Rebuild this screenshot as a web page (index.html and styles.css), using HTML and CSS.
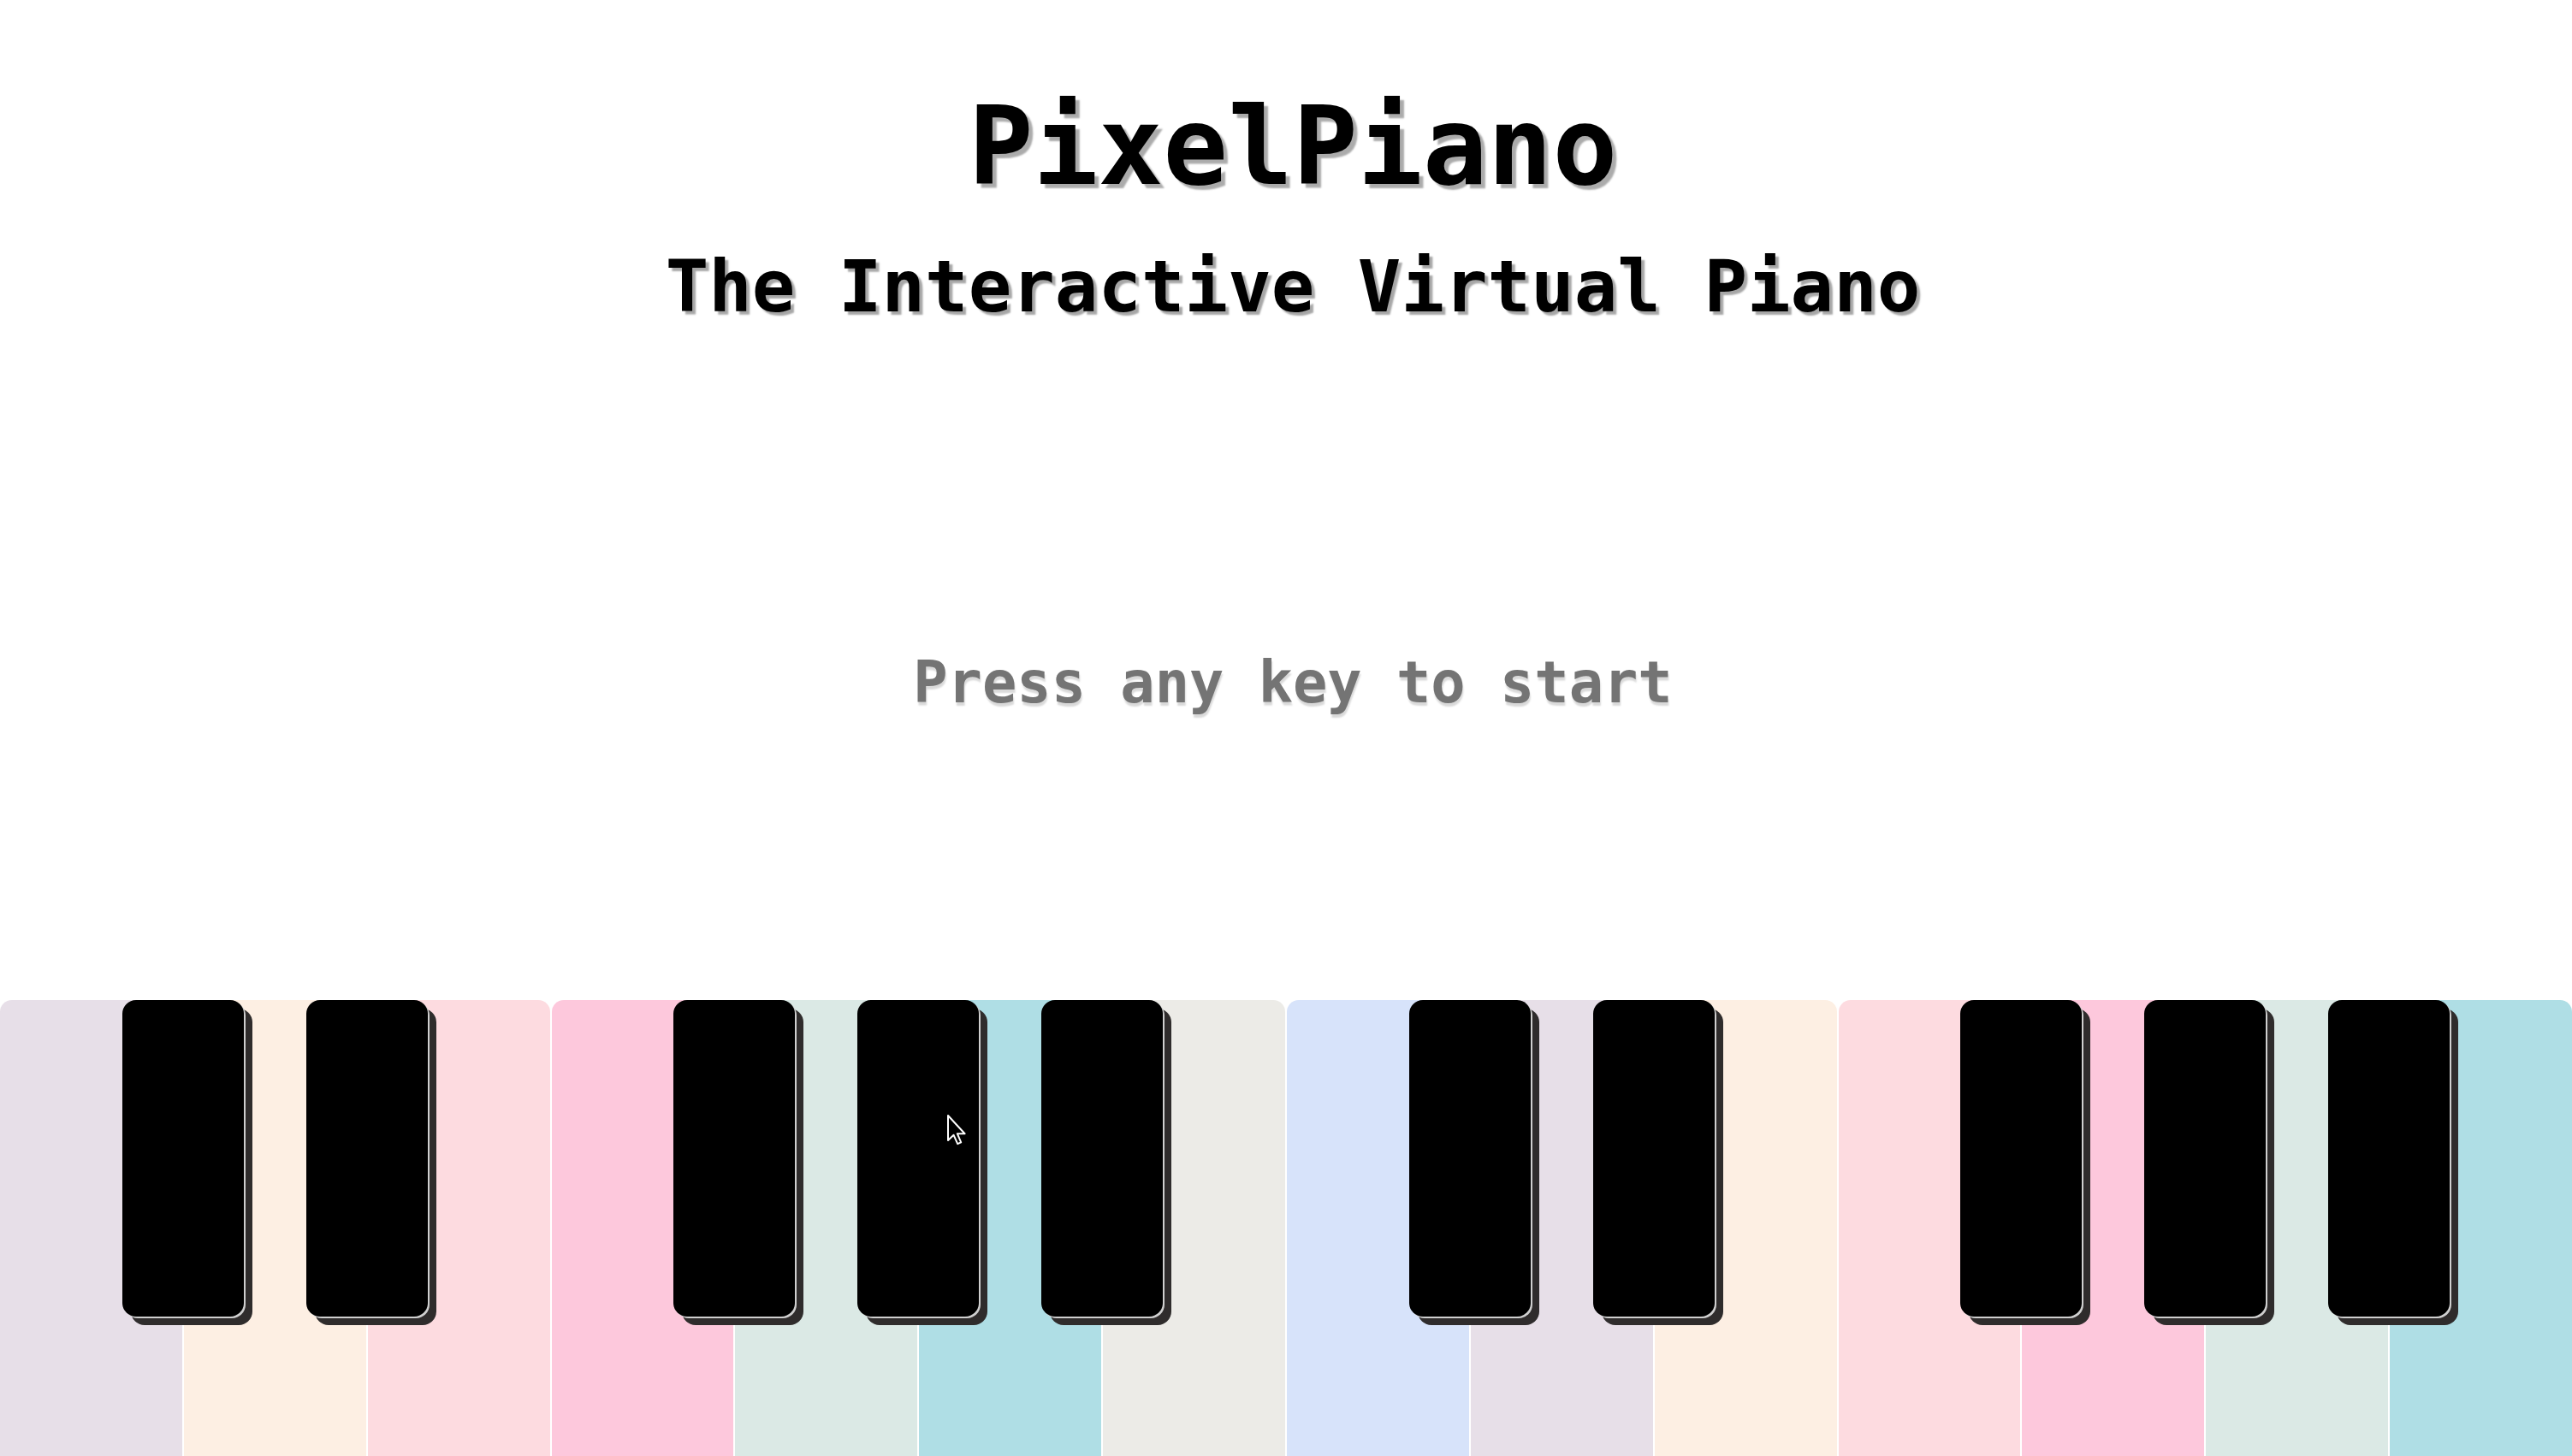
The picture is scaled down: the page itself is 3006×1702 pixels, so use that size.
FILE: index.html
```html
<!DOCTYPE html>
<html lang="en">
<head>
<meta charset="utf-8">
<title>PixelPiano</title>
<link rel="stylesheet" href="styles.css">
</head>
<body>
<div class="app">
  <header class="header">
    <h1 class="title">PixelPiano</h1>
    <h2 class="subtitle">The Interactive Virtual Piano</h2>
  </header>
  <p class="prompt">Press any key to start</p>
  <div class="piano">
    <div class="whites">
      <div class="wk lavender"></div>
      <div class="wk peach"></div>
      <div class="wk blush"></div>
      <div class="wk pink"></div>
      <div class="wk mint"></div>
      <div class="wk teal"></div>
      <div class="wk stone"></div>
      <div class="wk periwinkle"></div>
      <div class="wk lavender"></div>
      <div class="wk peach"></div>
      <div class="wk blush"></div>
      <div class="wk pink"></div>
      <div class="wk mint"></div>
      <div class="wk teal"></div>
    </div>
    <div class="blacks">
      <div class="bk at1"></div>
      <div class="bk at2"></div>
      <div class="bk at4"></div>
      <div class="bk at5"></div>
      <div class="bk at6"></div>
      <div class="bk at8"></div>
      <div class="bk at9"></div>
      <div class="bk at11"></div>
      <div class="bk at12"></div>
      <div class="bk at13"></div>
    </div>
    <svg class="cursor" width="24" height="38" viewBox="0 0 12 19" aria-hidden="true">
      <path d="M1 1 L1 15.5 L4.3 12.4 L6.6 17.6 L8.6 16.7 L6.4 11.6 L10.8 11.6 Z" fill="#000" stroke="#fff" stroke-width="1" stroke-linejoin="round"/>
    </svg>
  </div>
</div>
</body>
</html>
```
FILE: styles.css
```css
* { box-sizing: border-box; }
html, body { margin: 0; padding: 0; background: #ffffff; }
body { font-family: "DejaVu Sans Mono", "Liberation Mono", monospace; overflow: hidden; }

.app {
  display: flex;
  flex-direction: column;
  height: 100vh;
}

.header {
  padding-top: 96px;
  padding-left: 16px;
  text-align: center;
}

.title {
  margin: 0;
  font-size: 126px;
  line-height: 1.2;
  font-weight: bold;
  color: #000;
  text-shadow: 5px 5px 2px rgba(0, 0, 0, 0.33);
}

.subtitle {
  margin: 38px 0 0;
  font-size: 84px;
  line-height: 1.2;
  font-weight: bold;
  color: #000;
  text-shadow: 4px 4px 2px rgba(0, 0, 0, 0.35);
}

.prompt {
  margin: 372px 0 0;
  padding-left: 16px;
  text-align: center;
  font-size: 67px;
  line-height: 1.2;
  font-weight: bold;
  color: #747474;
  text-shadow: 1px 4px 2px rgba(0, 0, 0, 0.15);
}

.piano {
  position: relative;
  margin-top: auto;
  height: 533px;
  flex: none;
}

.whites {
  display: flex;
  gap: 2px;
  height: 100%;
}

.wk {
  flex: 1 1 0;
  border-radius: 14px 14px 0 0;
}

.lavender { background: #e7dfe8; }
.peach { background: #fdefe3; }
.blush { background: #fddbe0; }
.pink { background: #fdc8dc; }
.mint { background: #dbe9e5; }
.teal { background: #afdee5; }
.stone { background: #ecebe7; }
.periwinkle { background: #d7e3fa; }

.blacks {
  position: absolute;
  top: 0;
  left: 0;
  right: 0;
  display: grid;
  grid-template-columns: repeat(14, 1fr);
  column-gap: 2px;
}

.bk {
  grid-row: 1;
  justify-self: center;
  width: 142px;
  height: 370px;
  background: #000;
  border-radius: 16px;
  box-shadow: 2px 2px 0 #cfcfcf, 10px 10px 0 #2f2c2c;
}

.at1 { grid-column: 1 / 3; }
.at2 { grid-column: 2 / 4; }
.at4 { grid-column: 4 / 6; }
.at5 { grid-column: 5 / 7; }
.at6 { grid-column: 6 / 8; }
.at8 { grid-column: 8 / 10; }
.at9 { grid-column: 9 / 11; }
.at11 { grid-column: 11 / 13; }
.at12 { grid-column: 12 / 14; }
.at13 { grid-column: 13 / 15; }

.cursor {
  position: absolute;
  left: 1106px;
  top: 133px;
}
```
